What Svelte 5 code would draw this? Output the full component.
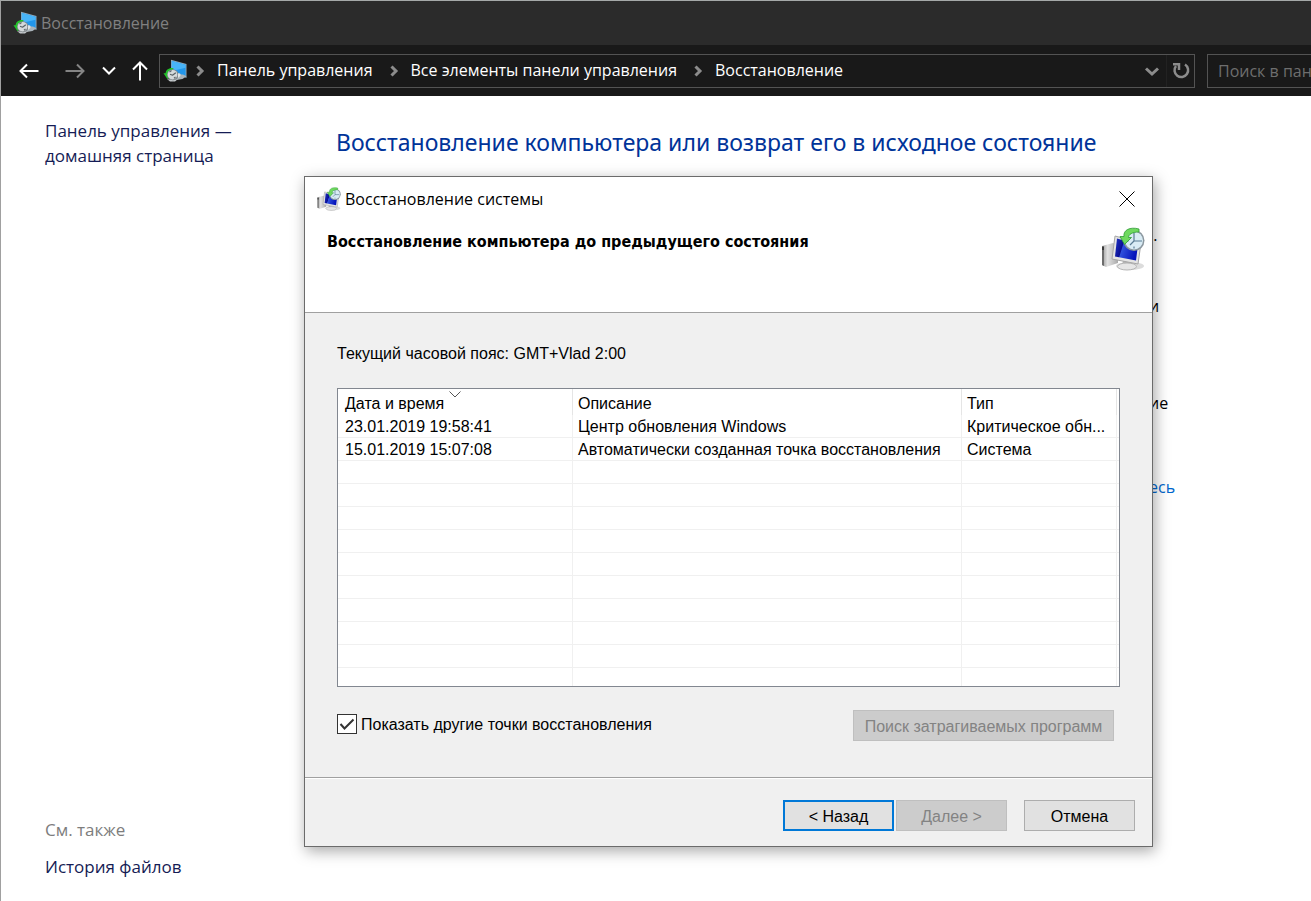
<script lang="ts">
  type RestorePoint = { date: string; description: string; kind: string };

  const crumbs = ["Панель управления", "Все элементы панели управления", "Восстановление"];

  const points: RestorePoint[] = [
    { date: "23.01.2019 19:58:41", description: "Центр обновления Windows", kind: "Критическое обн..." },
    { date: "15.01.2019 15:07:08", description: "Автоматически созданная точка восстановления", kind: "Система" },
  ];

  // the list always draws its grid down to the bottom edge
  const visibleRows = 12;
  const emptyRows = Array.from({ length: visibleRows - points.length }, (_, i) => i);

  let showOther = $state(true);
</script>

{#snippet recoveryIcon()}
  <svg class="recovery-icon" viewBox="0 0 24 24" aria-hidden="true">
    <path d="M8 .8 23.500 5v14L8 13z" fill="#8fa9bb" />
    <path d="M8.800 2 22.600 5.800v11.400L8.800 12.100z" fill="#2196ea" />
    <path d="M8.800 2 22.600 5.800v3L8.800 12.100z" fill="#48b4f8" />
    <path d="m12 16 8-.5 3.500 1.700-4 2.800-6 1z" fill="#aab4ba" />
    <path d="M10.500 9C5.500 8.500 2.800 11 2.600 14.200H.5l4 6 4.500-5.500z" fill="#22c32a" />
    <circle cx="9.800" cy="16" r="5.800" fill="#82898d" />
    <circle cx="9.500" cy="15.700" r="4.800" fill="#d5dadc" />
    <path d="m6.500 13 2-1.500M9.500 16.300l3.300-2.600M9.500 16.300l-2.500-1M12.500 18l-1.500 1.200" stroke="#5b6468" stroke-width="1.200" fill="none" />
    <path d="M15 14.500c2-.8 3 .8 2.300 2.500L15 19z" fill="#dfe4e6" />
    <path d="m4 20 3 2.500h5l3-2.500-5 1.200z" fill="#c3c8cb" />
  </svg>
{/snippet}

{#snippet restoreIcon(size: number)}
  <svg width={size} height={size} viewBox="0 0 44 44" aria-hidden="true">
    <defs>
      <linearGradient id="screen{size}" x1="0" y1="0" x2="1" y2="0.3">
        <stop offset="0" stop-color="#2135c8" />
        <stop offset="0.38" stop-color="#0a0f94" />
        <stop offset="0.42" stop-color="#2f50dc" />
        <stop offset="1" stop-color="#0714bb" />
      </linearGradient>
      <linearGradient id="case{size}" x1="0" y1="0" x2="1" y2="0">
        <stop offset="0" stop-color="#9a9a9a" />
        <stop offset="0.35" stop-color="#e2e2e2" />
        <stop offset="1" stop-color="#a9a9a9" />
      </linearGradient>
    </defs>
    <ellipse cx="29" cy="39" rx="14" ry="4" fill="#dcdcdc" />
    <path d="M1 19 12 16l5 2v18L5 40l-4-2z" fill="url(#case{size})" />
    <path d="M1 19h2v20l-2-1z" fill="#6d6d6d" />
    <path d="M1 20h2v3H1z" fill="#3b3b3b" />
    <path d="m22 33 9 2v5H21z" fill="#b4b4b4" />
    <ellipse cx="26" cy="39.500" rx="9.500" ry="3.500" fill="#e6e6e6" stroke="#b5b5b5" />
    <path d="m14 9 26 7-3 21-26-5z" fill="#e4e4e4" stroke="#a6a6a6" />
    <path d="m16 11.500 21 6-2 16-21-4z" fill="url(#screen{size})" />
    <circle cx="33" cy="13.500" r="10.500" fill="#8b979f" />
    <circle cx="33" cy="13.500" r="9" fill="#d9ecf5" />
    <path d="M33 5.500V14M33 14h8M33 19.500V21.500M25.500 14h2M33 14l-4 4" stroke="#5a7c94" stroke-width="1.200" fill="none" />
    <path d="M38 2C29-.5 22 3 23 9.500h-4l4.500 8 7-7H27.500c0-3 3.500-5.500 10.500-5.500z" fill="#6fd95f" stroke="#2f9a35" stroke-width="0.800" />
  </svg>
{/snippet}

<div class="window">
  <header class="titlebar">
    {@render recoveryIcon()}
    <span>Восстановление</span>
  </header>

  <nav class="toolbar">
    <button class="nav-btn" aria-label="Назад">
      <svg width="22" height="18" viewBox="0 0 22 18"><path d="M20.500 9H2.500M9 2.500 2.500 9l6.500 6.500" /></svg>
    </button>
    <button class="nav-btn forward" aria-label="Вперед" disabled>
      <svg width="22" height="18" viewBox="0 0 22 18"><path d="M1.500 9h18M13 2.500 19.500 9 13 15.500" /></svg>
    </button>
    <button class="nav-btn recent" aria-label="Последние расположения">
      <svg width="16" height="18" viewBox="0 0 16 18"><path d="m2 5.500 6 6 6-6" /></svg>
    </button>
    <button class="nav-btn up" aria-label="Вверх">
      <svg width="18" height="22" viewBox="0 0 18 22"><path d="M9 20.500V2.500M2 9.500l7-7 7 7" /></svg>
    </button>

    <div class="address">
      {@render recoveryIcon()}
      <ol class="crumbs">
        {#each crumbs as crumb}
          <li>
            <svg width="10" height="12" viewBox="0 0 10 12" aria-hidden="true"><path d="m2.500 1.500 4.500 4.500-4.500 4.500" /></svg>
            <a href="#crumb">{crumb}</a>
          </li>
        {/each}
      </ol>
      <button class="address-btn" aria-label="Предыдущие расположения">
        <svg width="16" height="12" viewBox="0 0 16 12"><path d="m2 3.500 6 5.500 6-5.500" /></svg>
      </button>
      <button class="address-btn refresh" aria-label="Обновить">
        <svg width="18" height="20" viewBox="0 0 18 20">
          <path d="M13 3.500A6.800 6.800 0 1 1 4 5" />
          <path d="M1 3.200H7V9" />
        </svg>
      </button>
    </div>

    <input class="search" type="text" placeholder="Поиск в пан" aria-label="Поиск" />
  </nav>

  <div class="page">
    <aside class="sidebar">
      <a href="#home">Панель управления —<br />домашняя страница</a>
      <div class="see-also">
        <h2>См. также</h2>
        <a href="#history">История файлов</a>
      </div>
    </aside>
    <main class="content">
      <h1>Восстановление компьютера или возврат его в исходное состояние</h1>
      <ul class="descriptions">
        <li>&nbsp;.</li>
        <li>и</li>
        <li class="tall">ие</li>
        <li><a href="#here">есь</a></li>
      </ul>
    </main>
  </div>
</div>

<div class="dialog" role="dialog" aria-labelledby="dialog-title">
  <div class="dialog-title">
    {@render restoreIcon(24)}
    <span id="dialog-title">Восстановление системы</span>
    <button class="close" aria-label="Закрыть">
      <svg width="16" height="16" viewBox="0 0 16 16"><path d="m.5.5 15 15M15.500.5l-15 15" /></svg>
    </button>
  </div>

  <div class="dialog-header">
    <h2>Восстановление компьютера до предыдущего состояния</h2>
    {@render restoreIcon(44)}
  </div>

  <div class="dialog-body">
    <p>Текущий часовой пояс: GMT+Vlad 2:00</p>

    <div class="list">
      <table>
        <colgroup>
          <col class="col-date" />
          <col class="col-description" />
          <col class="col-kind" />
          <col />
        </colgroup>
        <thead>
          <tr>
            <th>
              Дата и время
              <svg class="sort" width="12" height="7" viewBox="0 0 12 7" aria-hidden="true"><path d="m.5.500 5.500 5.500L11.500.5" /></svg>
            </th>
            <th>Описание</th>
            <th>Тип</th>
            <td></td>
          </tr>
        </thead>
        <tbody>
          {#each points as point}
            <tr>
              <td>{point.date}</td>
              <td>{point.description}</td>
              <td>{point.kind}</td>
              <td></td>
            </tr>
          {/each}
          {#each emptyRows as row (row)}
            <tr><td></td><td></td><td></td><td></td></tr>
          {/each}
        </tbody>
      </table>
    </div>

    <div class="options">
      <label>
        <span class="check">
          <input type="checkbox" bind:checked={showOther} />
          {#if showOther}
            <svg width="20" height="20" viewBox="0 0 20 20" aria-hidden="true"><path d="m3.500 10 4 4.500 9-9" /></svg>
          {/if}
        </span>
        Показать другие точки восстановления
      </label>
      <button class="btn scan" disabled>Поиск затрагиваемых программ</button>
    </div>
  </div>

  <footer class="dialog-footer">
    <button class="btn default">&lt; Назад</button>
    <button class="btn" disabled>Далее &gt;</button>
    <button class="btn cancel">Отмена</button>
  </footer>
</div>

<style>
  :global(body) {
    overflow: hidden;
    background: #fff;
  }

  * {
    box-sizing: border-box;
  }

  svg {
    flex: none;
    display: block;
  }

  button {
    font: inherit;
  }

  .window {
    display: flex;
    flex-direction: column;
    min-height: 100vh;
    border-top: 1px solid #a5a9a8;
    border-left: 1px solid #a0a0a0;
    font-family: "Open Sans", "Noto Sans", sans-serif;
    font-size: 16px;
    line-height: 25px;
  }

  .recovery-icon {
    width: 24px;
    height: 24px;
  }

  .titlebar {
    display: flex;
    align-items: center;
    gap: 4px;
    height: 44px;
    padding-left: 12px;
    background: #2b2b2b;
    color: #808080;
  }

  .toolbar {
    display: flex;
    align-items: center;
    height: 51px;
    overflow: hidden;
    background: #191919;
  }

  .nav-btn {
    display: flex;
    justify-content: center;
    width: 48px;
    padding: 0;
    margin-left: 4px;
    border: 0;
    background: none;
  }

  .nav-btn path {
    fill: none;
    stroke: #fff;
    stroke-width: 2;
  }

  .nav-btn.forward {
    width: 36px;
  }

  .nav-btn.forward path {
    stroke: #848484;
  }

  .nav-btn.recent {
    width: 24px;
  }

  .nav-btn.up {
    width: 30px;
  }

  .address {
    display: flex;
    flex: 1 1 0;
    align-items: center;
    min-width: 0;
    height: 34px;
    margin: 0 12px 0 4px;
    padding-left: 3px;
    border: 1px solid #535353;
  }

  .crumbs {
    display: flex;
    flex: 1;
    margin: 0;
    padding: 0 0 0 8px;
    list-style: none;
    white-space: nowrap;
  }

  .crumbs li {
    display: flex;
    align-items: center;
    gap: 12px;
    padding-right: 16px;
  }

  .crumbs a {
    color: #fff;
    text-decoration: none;
  }

  .crumbs path,
  .address-btn path {
    fill: none;
    stroke: #8c8c8c;
    stroke-width: 3;
  }

  .address-btn {
    display: flex;
    align-items: center;
    justify-content: center;
    width: 28px;
    height: 32px;
    padding: 0;
    border: 0;
    background: none;
  }

  .address-btn.refresh {
    border-left: 1px solid #222;
  }

  .address-btn.refresh path {
    stroke-width: 2.5;
  }

  .search {
    flex: 0 0 104px;
    width: 104px;
    min-width: 0;
    height: 34px;
    padding: 0 0 0 10px;
    border: 1px solid #535353;
    border-right: 0;
    border-radius: 0;
    background: #191919;
    color: #fff;
    font: inherit;
  }

  .search::placeholder {
    color: #6e6e6e;
    opacity: 1;
  }

  .page {
    display: flex;
    flex: 1;
    background: #fff;
  }

  .sidebar {
    display: flex;
    flex: 0 0 335px;
    flex-direction: column;
    justify-content: space-between;
    padding: 22px 0 22px 44px;
    font-size: 17px;
  }

  .sidebar a {
    color: #151c55;
    text-decoration: none;
  }

  .see-also h2 {
    margin: 0 0 12px;
    color: #7d7d7d;
    font-size: 17px;
    font-weight: 400;
  }

  .content {
    flex: 1;
    min-width: 0;
    padding-top: 30px;
  }

  h1 {
    margin: 0;
    color: #003399;
    font-family: "Noto Sans", sans-serif;
    font-size: 23px;
    font-weight: 400;
    line-height: 32px;
    white-space: nowrap;
  }

  .descriptions {
    margin: 0;
    padding: 65px 0 0 813px;
    list-style: none;
  }

  .descriptions li {
    height: 71px;
  }

  .descriptions li:nth-child(n + 2) {
    height: 97px;
  }

  .descriptions li.tall {
    height: 84px;
  }

  .descriptions a {
    color: #0066cc;
    text-decoration: none;
  }

  .dialog {
    position: absolute;
    top: 176px;
    left: 304px;
    width: 849px;
    border: 1px solid #6b6b6b;
    background: #f0f0f0;
    box-shadow: 2px 4px 14px rgba(0, 0, 0, 0.35);
    color: #000;
    font-family: "Liberation Sans", Arial, sans-serif;
    font-size: 16px;
    line-height: 23px;
  }

  .dialog-title {
    display: flex;
    align-items: center;
    gap: 4px;
    height: 44px;
    padding: 0 17px 0 12px;
    background: #fff;
    font-family: "Open Sans", "Noto Sans", sans-serif;
  }

  .close {
    margin-left: auto;
    padding: 0;
    border: 0;
    background: none;
  }

  .close path,
  .sort path {
    fill: none;
    stroke: #000;
    stroke-width: 1;
  }

  .sort path {
    stroke: #555;
  }

  .dialog-header {
    display: flex;
    justify-content: space-between;
    height: 92px;
    padding: 6px 7px 0 22px;
    border-bottom: 1px solid #a0a0a0;
    background: #fff;
  }

  .dialog-header h2 {
    margin: 3px 0 0;
    font-family: "DejaVu Sans Condensed", "DejaVu Sans", sans-serif;
    font-size: 16px;
    font-weight: 700;
    line-height: 23px;
  }

  .dialog-body {
    padding: 29px 32px 36px;
    border-bottom: 1px solid #a0a0a0;
  }

  .dialog-body p {
    margin: 0 0 23px;
  }

  .list {
    height: 299px;
    overflow: hidden;
    border: 1px solid #828790;
    background: #fff;
  }

  table {
    width: 100%;
    table-layout: fixed;
    border-collapse: separate;
    border-spacing: 0;
  }

  .col-date {
    width: 235px;
  }

  .col-description {
    width: 389px;
  }

  .col-kind {
    width: 155px;
  }

  th {
    position: relative;
    height: 26px;
    padding: 3px 5px 0;
    border-right: 1px solid #e5e5e5;
    font-weight: 400;
    text-align: left;
  }

  tbody td {
    height: 23px;
    padding: 2px 5px 0;
    border-right: 1px solid #f0f0f0;
    border-bottom: 1px solid #f0f0f0;
    line-height: 20px;
    white-space: nowrap;
  }

  th:first-child,
  td:first-child {
    padding-left: 7px;
  }

  td:last-child {
    padding: 0;
    border-right: 0;
  }

  .sort {
    position: absolute;
    top: 2px;
    left: 50%;
    margin-left: -6px;
  }

  .options {
    display: flex;
    align-items: center;
    justify-content: space-between;
    margin-top: 23px;
    padding-right: 6px;
  }

  label {
    display: flex;
    align-items: center;
    gap: 4px;
    margin-bottom: 3px;
  }

  .check {
    display: grid;
  }

  .check > * {
    grid-area: 1 / 1;
  }

  .check path {
    fill: none;
    stroke: #333;
    stroke-width: 2;
  }

  .check svg {
    pointer-events: none;
  }

  input[type="checkbox"] {
    width: 20px;
    height: 20px;
    margin: 0;
    border: 1px solid #333;
    background: #fff;
    appearance: none;
  }

  .btn {
    width: 111px;
    height: 31px;
    padding: 2px 0 0;
    border: 1px solid #adadad;
    background: #e1e1e1;
    color: #000;
    line-height: 20px;
  }

  .btn.default {
    border: 2px solid #0078d7;
  }

  .btn:disabled {
    border-color: #bfbfbf;
    background: #ccc;
    color: #838383;
  }

  .btn.scan {
    width: 261px;
  }

  .btn.cancel {
    margin-left: 15px;
  }

  .dialog-footer {
    display: flex;
    justify-content: flex-end;
    gap: 2px;
    padding: 21px 17px 15px;
    border-top: 1px solid #fff;
  }
</style>
